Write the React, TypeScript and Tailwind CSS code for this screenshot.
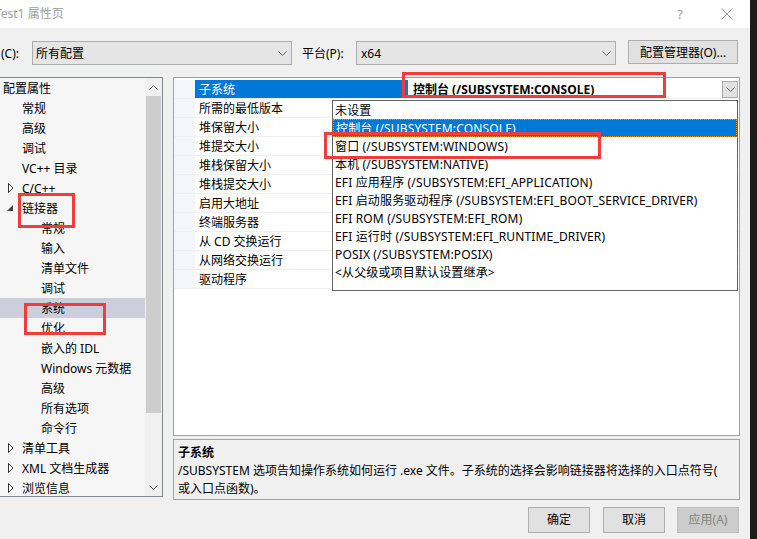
import React from 'react';

const FONT = "font-['Noto_Sans','Noto_Sans_CJK_SC',sans-serif]";

function Chevron({ color = '#606060', up = false }: { color?: string; up?: boolean }) {
  return (
    <svg width="9" height="5" viewBox="0 0 9 5">
      <polyline
        points={up ? '0.5,4.5 4.5,0.5 8.5,4.5' : '0.5,0.5 4.5,4.5 8.5,0.5'}
        fill="none"
        stroke={color}
        strokeWidth="1"
      />
    </svg>
  );
}

type TreeItem = { t: string; l: number; arrow?: 'open' | 'closed'; sel?: boolean };

const tree: TreeItem[] = [
  { t: '配置属性', l: 0 },
  { t: '常规', l: 1 },
  { t: '高级', l: 1 },
  { t: '调试', l: 1 },
  { t: 'VC++ 目录', l: 1 },
  { t: 'C/C++', l: 1, arrow: 'closed' },
  { t: '链接器', l: 1, arrow: 'open' },
  { t: '常规', l: 2 },
  { t: '输入', l: 2 },
  { t: '清单文件', l: 2 },
  { t: '调试', l: 2 },
  { t: '系统', l: 2, sel: true },
  { t: '优化', l: 2 },
  { t: '嵌入的 IDL', l: 2 },
  { t: 'Windows 元数据', l: 2 },
  { t: '高级', l: 2 },
  { t: '所有选项', l: 2 },
  { t: '命令行', l: 2 },
  { t: '清单工具', l: 1, arrow: 'closed' },
  { t: 'XML 文档生成器', l: 1, arrow: 'closed' },
  { t: '浏览信息', l: 1, arrow: 'closed' },
];

const props = [
  '子系统',
  '所需的最低版本',
  '堆保留大小',
  '堆提交大小',
  '堆栈保留大小',
  '堆栈提交大小',
  '启用大地址',
  '终端服务器',
  '从 CD 交换运行',
  '从网络交换运行',
  '驱动程序',
];

const options = [
  '未设置',
  '控制台 (/SUBSYSTEM:CONSOLE)',
  '窗口 (/SUBSYSTEM:WINDOWS)',
  '本机 (/SUBSYSTEM:NATIVE)',
  'EFI 应用程序 (/SUBSYSTEM:EFI_APPLICATION)',
  'EFI 启动服务驱动程序 (/SUBSYSTEM:EFI_BOOT_SERVICE_DRIVER)',
  'EFI ROM (/SUBSYSTEM:EFI_ROM)',
  'EFI 运行时 (/SUBSYSTEM:EFI_RUNTIME_DRIVER)',
  'POSIX (/SUBSYSTEM:POSIX)',
  '<从父级或项目默认设置继承>',
];

function TreeArrow({ kind }: { kind: 'open' | 'closed' }) {
  if (kind === 'closed') {
    return (
      <svg width="6" height="10" viewBox="0 0 6 10">
        <polygon points="0.5,0.5 5,5 0.5,9.5" fill="#ffffff" stroke="#333333" strokeWidth="1" />
      </svg>
    );
  }
  return (
    <svg width="6" height="7" viewBox="0 0 6 7">
      <polygon points="6,0 6,6 0,6" fill="#404040" />
    </svg>
  );
}

export default function App() {
  return (
    <div className={`w-[757px] h-[539px] flex overflow-hidden relative bg-[#1c1c1c] ${FONT} text-[12px] text-black`}>
      <div className="w-[750px] h-full flex flex-col bg-[#f0f0f0]">
        {/* Title bar */}
        <div className="h-[28px] bg-white flex items-center shrink-0">
          <span className="ml-[-5px] text-[#a0a0a0] leading-[16px] whitespace-nowrap">Test1 属性页</span>
          <span className="ml-auto text-[#a0a0a0] text-[13px] leading-[16px] mr-[38px]">?</span>
          <svg width="12" height="12" viewBox="0 0 12 12" className="mr-[17px]">
            <line x1="0.5" y1="0.5" x2="11.5" y2="11.5" stroke="#9a9a9a" strokeWidth="1" />
            <line x1="11.5" y1="0.5" x2="0.5" y2="11.5" stroke="#9a9a9a" strokeWidth="1" />
          </svg>
        </div>

        {/* Config row */}
        <div className="h-[49px] flex items-start pt-[12px] shrink-0">
          <div className="h-[26px] flex items-center pt-[2px] pl-[1px] w-[32px] leading-[16px]">(C):</div>
          <div className="mt-[1px] w-[260px] h-[24px] bg-[#e5e5e5] border border-[#adadad] flex items-center pt-[1px] pl-[3px] pr-[4px]">
            <span className="leading-[16px]">所有配置</span>
            <span className="ml-auto flex"><Chevron /></span>
          </div>
          <div className="h-[26px] flex items-center pt-[2px] ml-[10px] w-[54px] leading-[16px]">平台(P):</div>
          <div className="mt-[1px] w-[260px] h-[24px] bg-[#e5e5e5] border border-[#adadad] flex items-center pt-[1px] pl-[4px] pr-[4px]">
            <span className="leading-[16px]">x64</span>
            <span className="ml-auto flex"><Chevron /></span>
          </div>
          <div className="ml-[12px] w-[110px] h-[24px] bg-[#e1e1e1] border border-[#adadad] flex items-center justify-center pt-[1px]">
            <span className="leading-[16px]">配置管理器(O)...</span>
          </div>
        </div>

        {/* Middle */}
        <div className="h-[423px] flex shrink-0">
          {/* Tree */}
          <div className="w-[163px] h-[420px] border-t border-b border-r border-[#828790] flex overflow-hidden">
            <div className="w-[145px] bg-[#f6f6f6] flex flex-col overflow-hidden">
              {tree.map((it, i) => (
                <div
                  key={i}
                  className={`h-[20px] shrink-0 flex items-center pt-[2px] relative ${it.sel ? 'bg-[#cccedb]' : ''}`}
                >
                  {it.arrow && (
                    <span className={`absolute flex ${it.arrow === 'open' ? 'left-[7px] top-[7px]' : 'left-[8px] top-[5px]'}`}>
                      <TreeArrow kind={it.arrow} />
                    </span>
                  )}
                  <span
                    className={`whitespace-nowrap leading-[16px] ${it.l === 0 ? 'pl-[3px]' : it.l === 1 ? 'pl-[22px]' : 'pl-[41px]'}`}
                  >
                    {it.t}
                  </span>
                </div>
              ))}
            </div>
            <div className="w-[17px] bg-[#f0f0f0] flex flex-col">
              <div className="h-[18px] flex items-center justify-center"><Chevron up color="#606060" /></div>
              <div className="h-[317px] mx-[1px] bg-[#cdcdcd]" />
              <div className="flex-1" />
              <div className="h-[17px] flex items-center justify-center"><Chevron color="#606060" /></div>
            </div>
          </div>

          {/* Right column */}
          <div className="ml-[10px] w-[567px] flex flex-col">
            <div className="h-[359px] border border-[#a0a0a0] bg-white pt-[2px] flex flex-col">
              {props.map((p, i) => (
                <div key={i} className="h-[19px] flex border-b border-[#f0f0f0]">
                  <div className="w-[21px] bg-[#f3f6fb]" />
                  <div
                    className={`w-[213px] flex items-center pt-[2px] pl-[4px] whitespace-nowrap ${i === 0 ? 'bg-[#0078d7] text-white' : ''}`}
                  >
                    <span className="leading-[16px]">{p}</span>
                  </div>
                  <div className="flex-1 flex items-center pl-[5px]">
                    {i === 0 && (
                      <>
                        <span className="font-bold leading-[16px] whitespace-nowrap pt-[2px]">控制台 (/SUBSYSTEM:CONSOLE)</span>
                        <span className="ml-auto mr-[1px] w-[16px] h-[17px] bg-[#e1e1e1] border border-[#adadad] flex items-center justify-center">
                          <Chevron />
                        </span>
                      </>
                    )}
                  </div>
                </div>
              ))}
            </div>

            <div className="mt-[3px] h-[61px] border border-[#a0a0a0] bg-[#f0f0f0] px-[4px] pt-[4px] flex flex-col">
              <div className="h-[18px] flex items-center font-bold"><span className="leading-[16px]">子系统</span></div>
              <div className="h-[18px] flex items-center whitespace-nowrap">
                <span className="leading-[16px]">/SUBSYSTEM 选项告知操作系统如何运行 .exe 文件。子系统的选择会影响链接器将选择的入口点符号(</span>
              </div>
              <div className="h-[18px] flex items-center whitespace-nowrap">
                <span className="leading-[16px]">或入口点函数)。</span>
              </div>
            </div>
          </div>
        </div>

        {/* Buttons */}
        <div className="flex-1 flex justify-end items-start pt-[7px] pr-[11px]">
          <div className="w-[62px] h-[26px] bg-[#e1e1e1] border border-[#adadad] flex items-center justify-center">
            <span className="leading-[16px]">确定</span>
          </div>
          <div className="ml-[13px] w-[62px] h-[26px] bg-[#e1e1e1] border border-[#adadad] flex items-center justify-center">
            <span className="leading-[16px]">取消</span>
          </div>
          <div className="ml-[12px] w-[62px] h-[26px] bg-[#cccccc] border border-[#bfbfbf] flex items-center justify-center text-[#838383]">
            <span className="leading-[16px]">应用(A)</span>
          </div>
        </div>
      </div>
      <div className="flex-1 bg-[#1c1c1c]" />

      {/* Dropdown list overlay */}
      <div className="absolute left-[332px] top-[100px] w-[406px] h-[191px] bg-white border border-[#646464] flex flex-col tracking-[0.15px]">
        {options.map((o, i) => (
          <div
            key={i}
            className={`h-[18px] flex items-center pt-[2px] pl-[2px] whitespace-nowrap ${i === 1 ? 'bg-[#0078d7] text-white border border-dotted border-[#e8922e] pl-[1px]' : ''}`}
          >
            <span className="leading-[16px]">{o}</span>
          </div>
        ))}
      </div>

      {/* Red annotation boxes */}
      <div className="absolute left-[402px] top-[72px] w-[264px] h-[26px] border-[3px] border-[#f13c3c]" />
      <div className="absolute left-[324px] top-[132px] w-[277px] h-[27px] border-[3px] border-[#f13c3c]" />
      <div className="absolute left-[18px] top-[193px] w-[57px] h-[35px] border-[3px] border-[#f13c3c]" />
      <div className="absolute left-[24px] top-[303px] w-[82px] h-[32px] border-[3px] border-[#f13c3c]" />
    </div>
  );
}
